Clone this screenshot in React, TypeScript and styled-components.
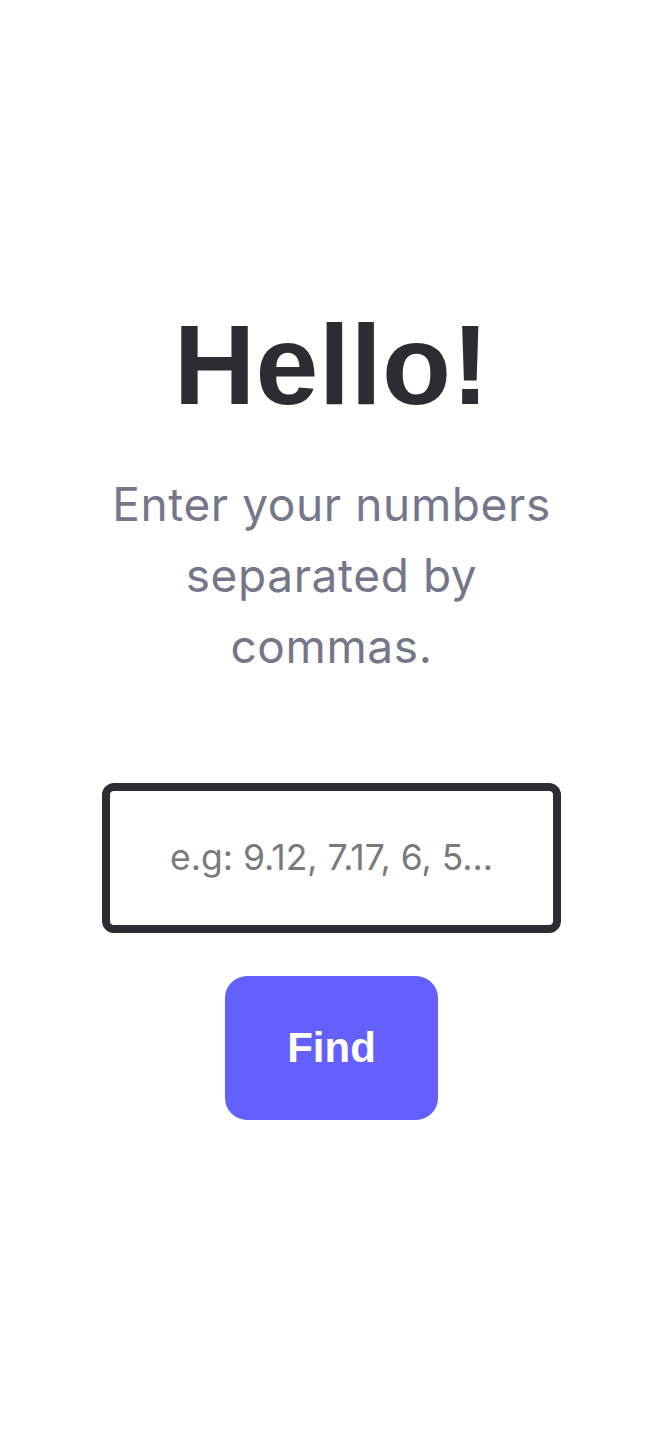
import React from "react";
import styled, { createGlobalStyle } from "styled-components";

const GlobalStyle = createGlobalStyle`
  html, body { margin: 0; padding: 0; background: #ffffff; }
  body { font-family: "Liberation Sans", Arial, sans-serif; }
  * { box-sizing: border-box; }
`;

const Page = styled.main`
  min-height: 100vh;
  display: flex;
  flex-direction: column;
  align-items: center;
  justify-content: center;
  padding-bottom: 6px;
`;

const Title = styled.h1`
  margin: 0;
  font-family: "Liberation Sans", Arial, sans-serif;
  font-weight: 700;
  font-size: 113px;
  line-height: 1;
  color: #2c2d30;
  letter-spacing: 0.3px;
`;

const Subtitle = styled.p`
  margin: 47px 0 0;
  max-width: 480px;
  text-align: center;
  font-family: Inter, "Liberation Sans", sans-serif;
  font-size: 46px;
  line-height: 71px;
  color: #76768a;
  letter-spacing: 0.6px;
`;

const Form = styled.form`
  margin-top: 101px;
  display: flex;
  flex-direction: column;
  align-items: center;
  gap: 43px;
`;

const Input = styled.input`
  width: 459px;
  height: 150px;
  border: 8px solid #2c2d30;
  border-radius: 12px;
  background: #fff;
  text-align: center;
  font-family: Inter, "Liberation Sans", sans-serif;
  font-size: 35.5px;
  color: #2c2d30;
  outline: none;
  &::placeholder { color: #7a7a7c; opacity: 1; }
`;

const Button = styled.button`
  width: 213px;
  height: 144px;
  border: none;
  border-radius: 22px;
  background: #6360ff;
  color: #ffffff;
  font-family: "Liberation Sans", Arial, sans-serif;
  font-weight: 700;
  font-size: 42px;
  cursor: pointer;
`;

export default function App() {
  return (
    <>
      <GlobalStyle />
      <Page>
        <Title>Hello!</Title>
        <Subtitle>Enter your numbers separated by commas.</Subtitle>
        <Form onSubmit={(e) => e.preventDefault()}>
          <Input placeholder="e.g: 9.12, 7.17, 6, 5..." />
          <Button type="submit">Find</Button>
        </Form>
      </Page>
    </>
  );
}
